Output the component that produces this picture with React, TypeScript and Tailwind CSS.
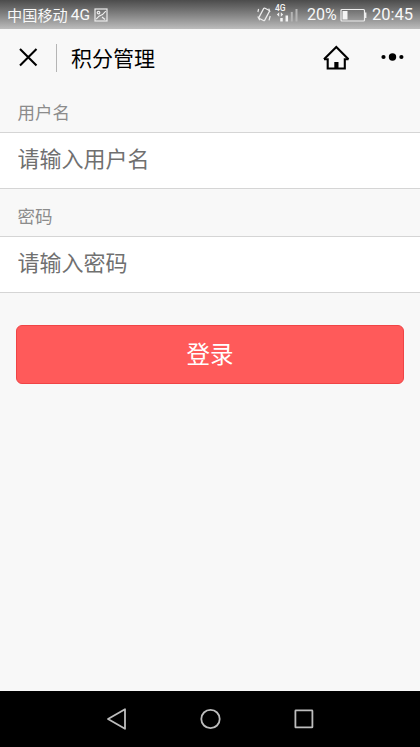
import React from "react";

function StatusBar() {
  return (
    <div className="flex h-[29px] shrink-0 items-center bg-linear-to-b from-[#4c4c4c] to-[#bdbdbd] pr-[7px] pl-[7px] text-[#f8f8f8]">
      <span className="pb-[2px] text-[15.2px] leading-[26px]">中国移动</span>
      <span className="ml-[3px] font-[Roboto] text-[15.5px] leading-[28px]">4G</span>
      <svg className="ml-[4px]" width="14" height="14" viewBox="0 0 14 14" fill="none" stroke="#ececec" strokeWidth="1.2">
        <rect x="1" y="1" width="12" height="12" />
        <circle cx="4.5" cy="4.6" r="1.3" />
        <path d="M2.2 11.2 5 8.2 8.5 6.6 11.8 3.2M8 9 11 11.5" />
      </svg>
      <svg className="ml-auto" width="44" height="29" viewBox="0 0 44 29" fill="none">
        <g stroke="#ececec" strokeWidth="1.2">
          <rect x="3.9" y="8.5" width="6.4" height="11.6" rx="1" transform="rotate(28 7 14.5)" />
          <path d="M1.6 9 0.9 12M0.8 16.5 2.8 20.3M13 12 11.8 8.6M13.2 16 12 20.3" />
        </g>
        <text x="18" y="11.2" fill="#f4f4f4" fontFamily="Roboto" fontSize="8.5" fontWeight="500">4G</text>
        <path d="M19.8 14.5 22.2 12.3V16.7zM26.2 14.5 23.8 12.3V16.7z" fill="#eee" />
        <path d="M24.5 18v3.5M29.8 15.5v6" stroke="#f4f4f4" strokeWidth="2.5" />
        <path d="M34.8 12v9.5M39.5 9v12.5" stroke="#b5b5b5" strokeWidth="2" />
      </svg>
      <span className="ml-[6px] w-[32px] pt-px font-[Roboto] text-[16px] leading-[28px] whitespace-nowrap">20%</span>
      <svg className="ml-[1px]" width="27" height="14" viewBox="0 0 27 14" fill="none">
        <rect x="1" y="1.5" width="23.5" height="11.5" rx="1" stroke="#eee" strokeWidth="1.2" />
        <path d="M2.5 3h5v8.5h-5z" fill="#f4f4f4" />
        <path d="M25.7 4.5v5.5" stroke="#eee" strokeWidth="1.4" />
      </svg>
      <span className="ml-[5px] w-[41px] pt-px font-[Roboto] text-[16.5px] leading-[28px] whitespace-nowrap">20:45</span>
    </div>
  );
}

function Header() {
  return (
    <header className="flex h-[57px] shrink-0 items-center pr-[16px] pl-[19px] text-black">
      <svg width="19" height="19" viewBox="0 0 19 19" fill="none" stroke="currentColor" strokeWidth="2.1">
        <path d="M1 1 17.5 17.5M17.5 1 1 17.5" />
      </svg>
      <div className="ml-[18px] h-[28px] w-px bg-[#b5b5b5]" />
      <h1 className="ml-[14px] pb-[2px] text-[21px] leading-[30px]">积分管理</h1>
      <svg className="ml-auto" width="27" height="26" viewBox="0 0 27 26" fill="none" stroke="currentColor" strokeWidth="2.1">
        <path d="M1 14.2H4.7V23.5H21.8V14.2H25.5" />
        <path d="M1 14.2 13.3 1.9 25.5 14.2" />
        <path d="M11.3 24v-7h4.2v7z" fill="currentColor" stroke="none" />
      </svg>
      <svg className="-mt-px ml-[31px]" width="23" height="8" viewBox="0 0 23 8" fill="currentColor">
        <circle cx="2.5" cy="4" r="2.1" />
        <circle cx="11.5" cy="4" r="3.7" />
        <circle cx="20.4" cy="4" r="2.1" />
      </svg>
    </header>
  );
}

function Field({ label, placeholder, type }: { label: string; placeholder: string; type: string }) {
  return (
    <label className="block">
      <span className="block h-[47px] pt-[14px] pl-[17.5px] text-[17.5px] leading-[25px] text-[#8c8c8c]">{label}</span>
      <input
        type={type}
        placeholder={placeholder}
        className="block h-[57px] w-full border-y border-[#d5d5d5] bg-white pr-4 pb-[8px] pl-[17.5px] text-[22px] outline-none placeholder:text-[#707070]"
      />
    </label>
  );
}

function NavBar() {
  return (
    <nav className="flex h-[56px] shrink-0 items-center justify-center gap-[72px] bg-black pl-[2px] text-[#bdbdbd]">
      <svg width="22" height="24" viewBox="0 0 22 24" fill="none" stroke="currentColor" strokeWidth="1.8" strokeLinejoin="round">
        <path d="M19 2.2v19.6L2 12z" />
      </svg>
      <svg width="22" height="24" viewBox="0 0 22 24" fill="none" stroke="currentColor" strokeWidth="1.8">
        <circle cx="10.5" cy="12" r="9.2" />
      </svg>
      <svg width="22" height="24" viewBox="0 0 22 24" fill="none" stroke="currentColor" strokeWidth="1.8">
        <rect x="1.4" y="3.4" width="17" height="17" rx="0.5" />
      </svg>
    </nav>
  );
}

export default function App() {
  return (
    <div className="flex h-[747px] w-[420px] flex-col overflow-hidden bg-[#f8f8f8] font-['Noto_Sans_CJK_SC',sans-serif]">
      <StatusBar />
      <Header />
      <main className="-mt-px flex-1">
        <Field label="用户名" placeholder="请输入用户名" type="text" />
        <Field label="密码" placeholder="请输入密码" type="password" />
        <div className="px-[16px] pt-[32px]">
          <button className="block h-[59px] w-full rounded-[6px] border border-[#f04446] bg-[#ff5a5a] pb-[3px] text-[23.5px] leading-[34px] text-white">
            登录
          </button>
        </div>
      </main>
      <NavBar />
    </div>
  );
}
